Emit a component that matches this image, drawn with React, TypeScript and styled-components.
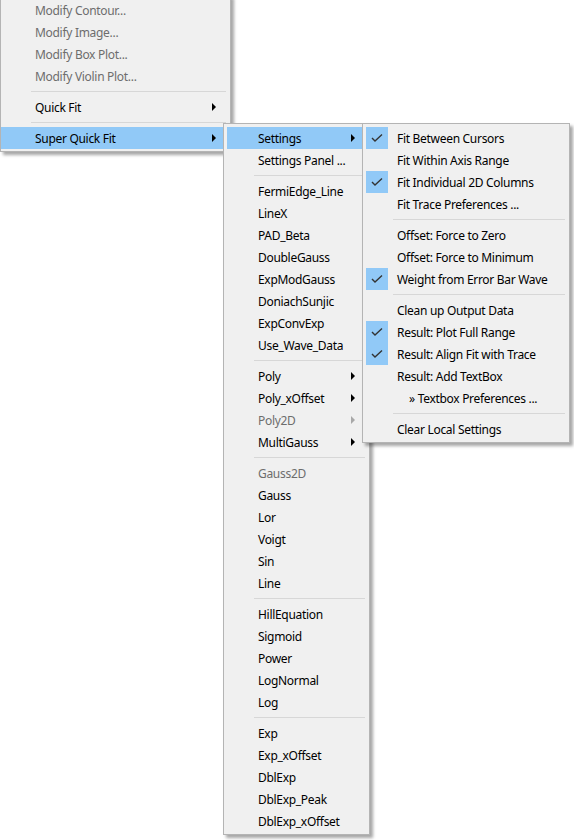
import React from "react";
import styled, { createGlobalStyle } from "styled-components";

type Entry =
  | { kind: "sep" }
  | {
      kind?: "item";
      label: string;
      sub?: boolean;
      checked?: boolean;
      disabled?: boolean;
      active?: boolean;
      indent?: boolean;
    };

const sep: Entry = { kind: "sep" };

const mainMenu: Entry[] = [
  { label: "Modify Contour...", disabled: true },
  { label: "Modify Image...", disabled: true },
  { label: "Modify Box Plot...", disabled: true },
  { label: "Modify Violin Plot...", disabled: true },
  sep,
  { label: "Quick Fit", sub: true },
  sep,
  { label: "Super Quick Fit", sub: true, active: true },
];

const fitMenu: Entry[] = [
  { label: "Settings", sub: true, active: true },
  { label: "Settings Panel ..." },
  sep,
  { label: "FermiEdge_Line" },
  { label: "LineX" },
  { label: "PAD_Beta" },
  { label: "DoubleGauss" },
  { label: "ExpModGauss" },
  { label: "DoniachSunjic" },
  { label: "ExpConvExp" },
  { label: "Use_Wave_Data" },
  sep,
  { label: "Poly", sub: true },
  { label: "Poly_xOffset", sub: true },
  { label: "Poly2D", sub: true, disabled: true },
  { label: "MultiGauss", sub: true },
  sep,
  { label: "Gauss2D", disabled: true },
  { label: "Gauss" },
  { label: "Lor" },
  { label: "Voigt" },
  { label: "Sin" },
  { label: "Line" },
  sep,
  { label: "HillEquation" },
  { label: "Sigmoid" },
  { label: "Power" },
  { label: "LogNormal" },
  { label: "Log" },
  sep,
  { label: "Exp" },
  { label: "Exp_xOffset" },
  { label: "DblExp" },
  { label: "DblExp_Peak" },
  { label: "DblExp_xOffset" },
];

const settingsMenu: Entry[] = [
  { label: "Fit Between Cursors", checked: true },
  { label: "Fit Within Axis Range" },
  { label: "Fit Individual 2D Columns", checked: true },
  { label: "Fit Trace Preferences ..." },
  sep,
  { label: "Offset: Force to Zero" },
  { label: "Offset: Force to Minimum" },
  { label: "Weight from Error Bar Wave", checked: true },
  sep,
  { label: "Clean up Output Data" },
  { label: "Result: Plot Full Range", checked: true },
  { label: "Result: Align Fit with Trace", checked: true },
  { label: "Result: Add TextBox" },
  { label: "» Textbox Preferences ...", indent: true },
  sep,
  { label: "Clear Local Settings" },
];

const GlobalStyle = createGlobalStyle`
  html, body {
    margin: 0;
    padding: 0;
    background: #ffffff;
  }
  body {
    font-family: "Noto Sans", "Segoe UI", sans-serif;
    font-size: 12px;
  }
`;

const Desktop = styled.div`
  position: relative;
  width: 574px;
  height: 840px;
  overflow: hidden;
  background: #ffffff;
`;

const Popup = styled.div<{ $x: number; $y: number; $w: number; $z: number; $padLeft?: number }>`
  position: absolute;
  left: ${(p) => p.$x}px;
  top: ${(p) => p.$y}px;
  width: ${(p) => p.$w}px;
  z-index: ${(p) => p.$z};
  box-sizing: border-box;
  padding: 3px 3px 2px ${(p) => p.$padLeft ?? 3}px;
  background: #f0f0f0;
  border: 1px solid #b4b4b4;
  box-shadow: 3px 3px 3px rgba(0, 0, 0, 0.35);
  display: flex;
  flex-direction: column;
`;

const Row = styled.div<{ $active?: boolean; $disabled?: boolean }>`
  display: flex;
  align-items: center;
  height: 22px;
  background: ${(p) => (p.$active ? "#91c9f7" : "transparent")};
  color: ${(p) => (p.$disabled ? "#6d6d6d" : "#000000")};
  white-space: nowrap;
`;

const CheckCell = styled.div<{ $on?: boolean; $w: number }>`
  flex: 0 0 ${(p) => p.$w}px;
  height: 22px;
  display: flex;
  align-items: center;
  justify-content: center;
  background: ${(p) => (p.$on ? "#91c9f7" : "transparent")};
`;

const Label = styled.span<{ $indent?: boolean }>`
  flex: 1;
  padding-left: ${(p) => (p.$indent ? 21 : 9)}px;
  padding-top: 2px;
  line-height: 20px;
  letter-spacing: -0.3px;
`;

const Arrow = styled.span<{ $disabled?: boolean }>`
  width: 0;
  height: 0;
  margin-right: 11px;
  border-top: 4px solid transparent;
  border-bottom: 4px solid transparent;
  border-left: 4px solid ${(p) => (p.$disabled ? "#a8a8a8" : "#000000")};
`;

const Separator = styled.div<{ $inset: number }>`
  height: 9px;
  display: flex;
  align-items: center;
  padding: 0 1px 0 ${(p) => p.$inset}px;

  &::after {
    content: "";
    flex: 1;
    height: 1px;
    background: #d7d7d7;
  }
`;

const CheckMark = () => (
  <svg width="22" height="22" viewBox="0 0 22 22">
    <path
      d="M6 11 L9 14 L16 7.5"
      fill="none"
      stroke="#333333"
      strokeWidth="1.4"
    />
  </svg>
);

type MenuProps = {
  items: Entry[];
  x: number;
  y: number;
  w: number;
  z: number;
  edge?: boolean;
};

// edge: the menu sits against the window's left side, its items run to the border
const Menu: React.FC<MenuProps> = ({ items, x, y, w, z, edge }) => {
  const check = edge ? 25 : 22;
  return (
    <Popup $x={x} $y={y} $w={w} $z={z} $padLeft={edge ? 0 : 3}>
      {items.map((it, i) => {
        if (it.kind === "sep") return <Separator key={i} $inset={check + 5} />;
        return (
          <Row key={i} $active={it.active} $disabled={it.disabled}>
            <CheckCell $on={it.checked} $w={check}>
              {it.checked && <CheckMark />}
            </CheckCell>
            <Label $indent={it.indent}>{it.label}</Label>
            {it.sub && <Arrow $disabled={it.disabled} />}
          </Row>
        );
      })}
    </Popup>
  );
};

export default function App() {
  return (
    <>
      <GlobalStyle />
      <Desktop>
        <Menu items={mainMenu} x={0} y={-5} w={231} z={1} edge />
        <Menu items={fitMenu} x={223} y={123} w={147} z={2} />
        <Menu items={settingsMenu} x={362} y={123} w={208} z={3} />
      </Desktop>
    </>
  );
}
